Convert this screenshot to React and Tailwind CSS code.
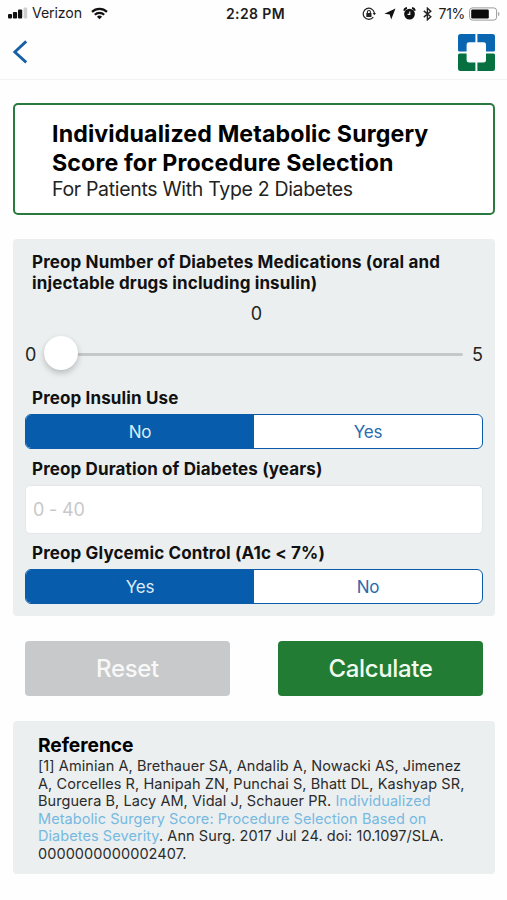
import { useState } from 'react';
import { clsx } from 'clsx';

const MAX_MEDICATIONS = 5;

function StatusBar() {
  return (
    <div className="flex h-[27px] items-center justify-between pl-[8px] pr-[6px] text-[#1c1c1c]">
      <div className="flex w-[160px] items-center">
        <svg width="20" height="12" viewBox="0 0 20 12" aria-hidden>
          <rect x="0" y="7" width="4" height="4.4" rx="1" fill="#111" />
          <rect x="4.9" y="5" width="4.2" height="6.4" rx="1" fill="#111" />
          <rect x="10" y="2.6" width="4.2" height="8.8" rx="1" fill="#111" />
          <rect x="15.6" y="0.4" width="3.6" height="11" rx="1" fill="#cfcfcf" />
        </svg>
        <span className="ml-[4px] text-[14.2px] leading-none tracking-[-0.12px]">Verizon</span>
        <svg className="ml-[9px]" width="17" height="13" viewBox="0 0 17 13" aria-hidden>
          <g fill="none" stroke="#111" strokeWidth="2.2">
            <path d="M1 4.9A10.6 10.6 0 0 1 16 4.9" />
            <path d="M3.8 7.8A6.6 6.6 0 0 1 13.2 7.8" />
          </g>
          <path d="M8.5 12.3 5.9 9.7A3.7 3.7 0 0 1 11.1 9.7Z" fill="#111" />
        </svg>
      </div>

      <span className="pl-[2px] text-[14px] font-semibold leading-none tracking-[0.4px]">2:28 PM</span>

      <div className="flex w-[160px] items-center justify-end">
        <svg width="14" height="14" viewBox="0 0 14 14" aria-hidden>
          <path d="M12.4 6A5.6 5.6 0 1 0 11.3 10.2" fill="none" stroke="#222" strokeWidth="1.2" />
          <path d="M10.6 5.9H14L12.3 8.3Z" fill="#222" />
          <rect x="4.3" y="6" width="5.2" height="4" rx="0.5" fill="#222" />
          <path d="M5.4 6.2V5a1.5 1.5 0 0 1 3 0V6.2" fill="none" stroke="#222" strokeWidth="1.1" />
        </svg>
        <svg className="ml-[8px]" width="12" height="12" viewBox="0 0 12 12" aria-hidden>
          <path d="M11.5 0.5 7.2 11.6 5.7 6.5 0.4 5.8Z" fill="#111" />
        </svg>
        <svg className="ml-[7px]" width="13" height="13" viewBox="0 0 13 13" aria-hidden>
          <circle cx="6.5" cy="7.1" r="5.4" fill="#111" />
          <path d="M1.2 3.8A3.4 3.4 0 0 1 4 1.1M9 1.1A3.4 3.4 0 0 1 11.8 3.8" fill="none" stroke="#111" strokeWidth="2" />
          <path d="M6.8 4.4V7.4H4.6" fill="none" stroke="#fff" strokeWidth="1.1" />
        </svg>
        <svg className="ml-[7px]" width="9" height="14" viewBox="0 0 9 14" aria-hidden>
          <path d="M0.8 3.9 7.8 9.7 4.4 12.8V1.2L7.8 4.3 0.8 10.1" fill="none" stroke="#222" strokeWidth="1.4" />
        </svg>
        <span className="ml-[7px] text-[14px] leading-none tracking-[-0.3px]">71%</span>
        <svg className="ml-[4px]" width="32" height="14" viewBox="0 0 32 14" aria-hidden>
          <rect x="0.6" y="0.9" width="27" height="12.2" rx="2.8" fill="#fff" stroke="#999" />
          <rect x="2.2" y="2.5" width="17.6" height="9" rx="1.2" fill="#0a0a0a" />
          <path d="M29.2 4.8A2.6 2.6 0 0 1 29.2 9.2Z" fill="#999" />
        </svg>
      </div>
    </div>
  );
}

function ClinicLogo() {
  return (
    <svg width="37" height="37" viewBox="0 0 37 37" aria-label="Home">
      <path d="M2.5 0H17.4V8.2H11Q8.6 8.2 8.6 10.6V17.4H1.5Q0 17.4 0 15.9V2.5Q0 0 2.5 0Z" fill="#0a66b0" />
      <path d="M19.4 0H34.5Q37 0 37 2.5V15.9Q37 17.4 35.5 17.4H28V10.6Q28 8.2 25.6 8.2H19.4Z" fill="#0a66b0" />
      <path d="M1.5 19.4H8.6V26.2Q8.6 28.6 11 28.6H17.4V37H2.5Q0 37 0 34.5V20.9Q0 19.4 1.5 19.4Z" fill="#067040" />
      <path d="M28 19.4H35.5Q37 19.4 37 20.9V34.5Q37 37 34.5 37H19.4V28.6H25.6Q28 28.6 28 26.2Z" fill="#067040" />
    </svg>
  );
}

function NavBar() {
  return (
    <header className="flex h-[53px] items-center justify-between border-b border-[#f3f3f3] px-[12px] pb-[2px]">
      <button type="button" aria-label="Back">
        <svg width="17" height="24" viewBox="0 0 17 24" aria-hidden>
          <path d="M14.2 1.4 2.8 12 14.2 22.4" fill="none" stroke="#1560a6" strokeWidth="2.8" />
        </svg>
      </button>
      <ClinicLogo />
    </header>
  );
}

function FieldLabel({ children, className }) {
  return (
    <p
      className={clsx(
        'whitespace-nowrap pl-[7px] text-[17px] font-bold leading-[21px] tracking-[0.13px] text-[#111]',
        className,
      )}
    >
      {children}
    </p>
  );
}

function Segmented({ options, value, onChange }) {
  return (
    <div className="flex h-[35px] overflow-hidden rounded-[6px] border border-[#0a5cab] bg-white">
      {options.map((option) => (
        <button
          key={option}
          type="button"
          onClick={() => onChange(option)}
          className={clsx(
            'flex-1 pt-px text-[17px] leading-none tracking-[-0.2px]',
            option === value ? 'bg-[#075cab] text-[#dcecf8]' : 'text-[#2a6aae]',
          )}
        >
          {option}
        </button>
      ))}
    </div>
  );
}

function Slider({ value }) {
  return (
    <div className="flex h-[34px] items-center justify-between text-[18px] text-[#222]">
      <span className="w-[11px]">0</span>
      <div className="relative ml-[8px] mr-[9px] h-[3px] flex-1 rounded-full bg-[#c4c8c9]">
        <div
          className="absolute top-[-17px] size-[34px] rounded-full bg-white shadow-[0_3px_6px_rgba(0,0,0,0.22)]"
          style={{ left: `${(value / MAX_MEDICATIONS) * 100}%` }}
        />
      </div>
      <span className="w-[11px]">{MAX_MEDICATIONS}</span>
    </div>
  );
}

export default function App() {
  const [medications, setMedications] = useState(0);
  const [insulin, setInsulin] = useState('No');
  const [duration, setDuration] = useState('');
  const [glycemic, setGlycemic] = useState('Yes');

  const reset = () => {
    setMedications(0);
    setInsulin('No');
    setDuration('');
    setGlycemic('Yes');
  };

  return (
    <div className="h-[900px] w-[507px] overflow-hidden bg-[#fefefe] font-['Inter',sans-serif]">
      <StatusBar />
      <NavBar />

      <main className="flex flex-col pl-[13px] pr-[12px] pt-[23px]">
        <section className="h-[112px] rounded-[5px] border-[2.5px] border-[#2a7a40] bg-white pl-[37px] pt-[15px]">
          <h1 className="text-[23.2px] font-bold leading-[29px] tracking-[0.12px] text-black">
            Individualized Metabolic Surgery
            <br />
            Score for Procedure Selection
          </h1>
          <p className="mt-[-1px] text-[19.5px] leading-[24px] tracking-[-0.32px] text-[#222]">
            For Patients With Type 2 Diabetes
          </p>
        </section>

        <section className="mt-[24px] h-[377px] rounded-[4px] bg-[#ebeff0] px-[12px] pt-[13px]">
          <FieldLabel>
            Preop Number of Diabetes Medications (oral and
            <br />
            injectable drugs including insulin)
          </FieldLabel>
          <p className="mt-[9px] pl-[5px] text-center text-[18px] leading-[22px] text-[#222]">{medications}</p>
          <div className="mt-[12px]">
            <Slider value={medications} />
          </div>

          <FieldLabel className="mt-[17px]">Preop Insulin Use</FieldLabel>
          <div className="mt-[5px]">
            <Segmented options={['No', 'Yes']} value={insulin} onChange={setInsulin} />
          </div>

          <FieldLabel className="mt-[10px]">Preop Duration of Diabetes (years)</FieldLabel>
          <input
            value={duration}
            onChange={(e) => setDuration(e.target.value)}
            placeholder="0 - 40"
            className="mt-[5px] block h-[49px] w-full rounded-[5px] border border-[#e4e7e8] bg-white px-[7px] text-[18px] tracking-[-0.2px] placeholder:text-[#c8c8c8]"
          />

          <FieldLabel className="mt-[9px]">Preop Glycemic Control (A1c &lt; 7%)</FieldLabel>
          <div className="mt-[5px]">
            <Segmented options={['Yes', 'No']} value={glycemic} onChange={setGlycemic} />
          </div>
        </section>

        <div className="mt-[25px] flex justify-between px-[12px] text-[24px] font-medium tracking-[-0.35px]">
          <button type="button" onClick={reset} className="h-[55px] w-[205px] rounded-[4px] bg-[#c7c9ca] text-[#f8f8f8]">
            Reset
          </button>
          <button type="button" className="h-[55px] w-[205px] rounded-[4px] bg-[#227c33] text-[#f2fbf0]">
            Calculate
          </button>
        </div>

        <section className="mt-[25px] h-[153px] rounded-[4px] bg-[#ebeff0] pl-[25px] pt-[12px]">
          <h2 className="text-[19.2px] font-bold leading-[24px] tracking-[-0.05px] text-black">Reference</h2>
          <p className="whitespace-nowrap text-[14.5px] leading-[17.6px] tracking-[0.07px] text-[#2b2b2b]">
            [1] Aminian A, Brethauer SA, Andalib A, Nowacki AS, Jimenez
            <br />
            A, Corcelles R, Hanipah ZN, Punchai S, Bhatt DL, Kashyap SR,
            <br />
            Burguera B, Lacy AM, Vidal J, Schauer PR. <a className="text-[#76b9e0]">Individualized</a>
            <br />
            <a className="text-[#76b9e0]">Metabolic Surgery Score: Procedure Selection Based on</a>
            <br />
            <a className="text-[#76b9e0]">Diabetes Severity</a>. Ann Surg. 2017 Jul 24. doi: 10.1097/SLA.
            <br />
            0000000000002407.
          </p>
        </section>
      </main>
    </div>
  );
}
